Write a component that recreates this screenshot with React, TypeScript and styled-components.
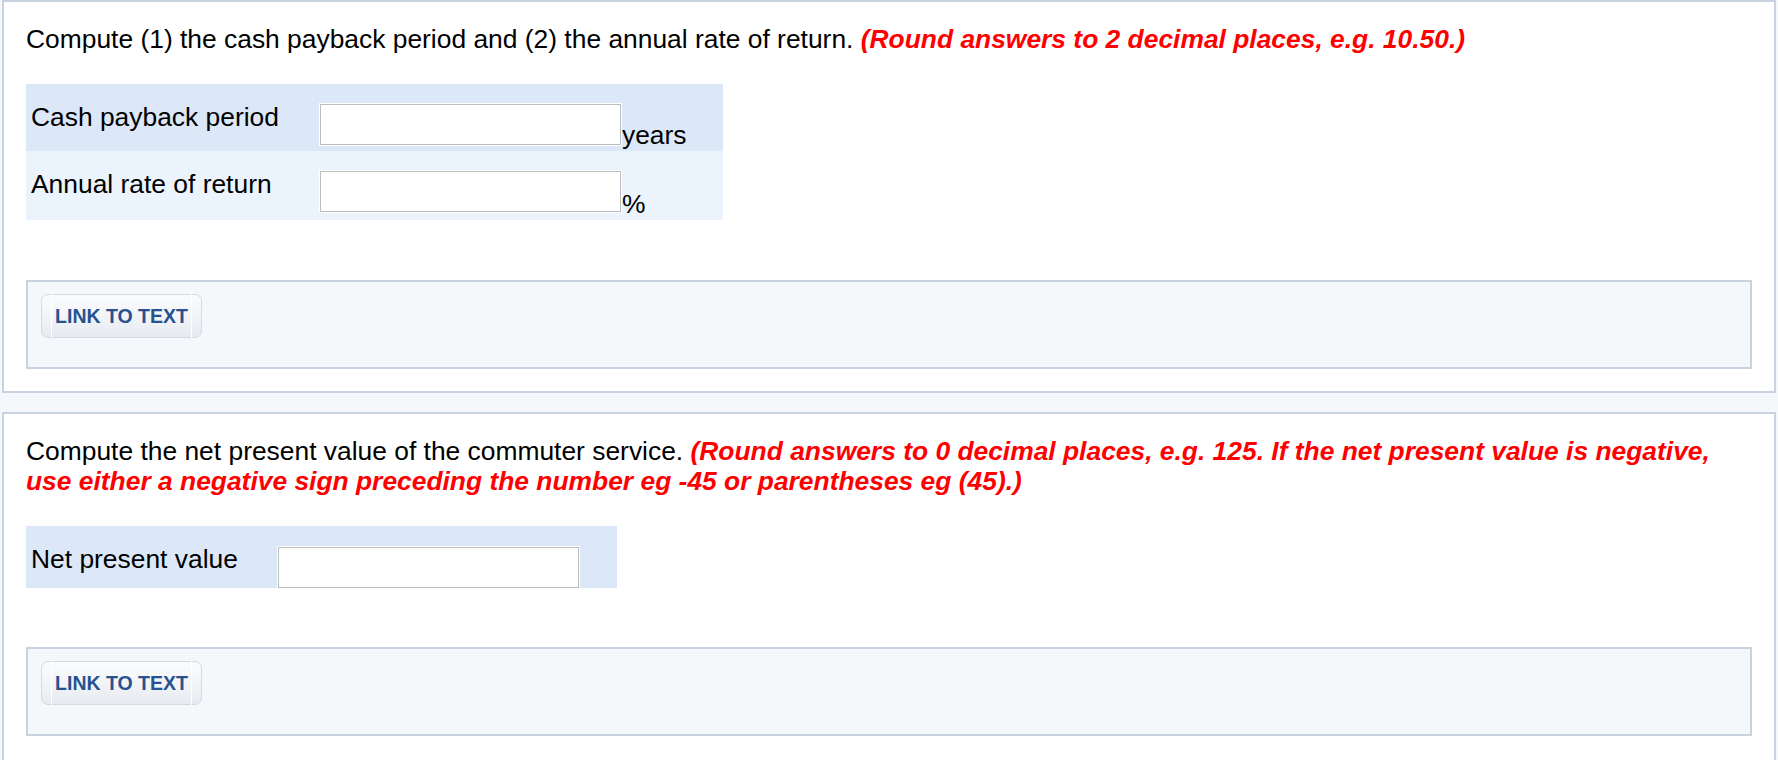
import React from 'react';
import styled, { createGlobalStyle } from 'styled-components';

const GlobalStyle = createGlobalStyle`
  html, body {
    margin: 0;
    padding: 0;
    background: #f4f8fb;
  }
  body {
    font-family: "Liberation Sans", Arial, Helvetica, sans-serif;
    color: #000;
  }
`;

const Page = styled.div`
  padding: 0 2px;
`;

const Panel = styled.section<{ $padBottom: number }>`
  background: #fff;
  border: 2px solid #c9d3e0;
  padding: 22px 22px ${(p) => p.$padBottom}px;
  margin-bottom: 19px;
`;

const Prompt = styled.p`
  margin: 0;
  font-size: 26.4px;
  line-height: 30px;
`;

const Note = styled.strong`
  color: #ff0000;
  font-style: italic;
  font-weight: bold;
`;

const AnswerTable = styled.div`
  display: flex;
  flex-direction: column;
  align-items: flex-start;
  margin-top: 30px;
`;

interface RowProps {
  $bg: string;
  $height: number;
}

const Row = styled.div<RowProps>`
  display: flex;
  align-items: flex-start;
  box-sizing: border-box;
  height: ${(p) => p.$height}px;
  background: ${(p) => p.$bg};
`;

const Label = styled.div<{ $width: number }>`
  box-sizing: border-box;
  width: ${(p) => p.$width}px;
  padding: 18px 0 0 5px;
  font-size: 26.4px;
  line-height: 30px;
`;

const Field = styled.input<{ $top: number }>`
  box-sizing: border-box;
  margin: ${(p) => p.$top}px 0 0 0;
  width: 301px;
  height: 41px;
  padding: 0 4px;
  border: 1px solid #bdbdbd;
  outline: 1px solid #fff;
  background: #fff;
  font-family: inherit;
  font-size: 22px;
`;

const Unit = styled.span<{ $width: number }>`
  align-self: flex-end;
  width: ${(p) => p.$width}px;
  margin-bottom: 3px;
  font-size: 26.4px;
  line-height: 26px;
  padding-left: 1px;
`;

const LinkBox = styled.div<{ $gap: number }>`
  box-sizing: border-box;
  height: 89px;
  margin-top: ${(p) => p.$gap}px;
  padding: 12px 13px;
  background: #f4f8fb;
  border: 2px solid #c9d3e0;
`;

const LinkButton = styled.button`
  position: relative;
  box-sizing: border-box;
  width: 161px;
  height: 44px;
  padding: 0;
  border: 1px solid #d2dae4;
  border-radius: 7px;
  background: linear-gradient(#fafbfd 0%, #f1f4f7 55%, #e6eaef 100%);
  color: #27528f;
  font-family: inherit;
  font-size: 19.5px;
  font-weight: bold;
  cursor: pointer;

  &::before,
  &::after {
    content: '';
    position: absolute;
    top: -1px;
    bottom: -1px;
    width: 1px;
    background: rgba(255, 255, 255, 0.95);
  }
  &::before {
    left: 9px;
  }
  &::after {
    right: 9px;
  }
`;

interface Line {
  label: string;
  unit?: string;
  height: number;
}

interface QuestionProps {
  text: React.ReactNode;
  lines: Line[];
  labelWidth: number;
  unitWidth: number;
  inputTop: number;
  linkGap: number;
  padBottom: number;
}

const rowColors = ['#dce8f8', '#ebf3fd'];

const Question = ({ text, lines, labelWidth, unitWidth, inputTop, linkGap, padBottom }: QuestionProps) => (
  <Panel $padBottom={padBottom}>
    <Prompt>{text}</Prompt>
    <AnswerTable>
      {lines.map((line, i) => (
        <Row key={line.label} $bg={rowColors[i % 2]} $height={line.height}>
          <Label $width={labelWidth}>{line.label}</Label>
          <Field type="text" $top={inputTop} aria-label={line.label} />
          <Unit $width={unitWidth}>{line.unit}</Unit>
        </Row>
      ))}
    </AnswerTable>
    <LinkBox $gap={linkGap}>
      <LinkButton type="button">LINK TO TEXT</LinkButton>
    </LinkBox>
  </Panel>
);

export default function App() {
  return (
    <Page>
      <GlobalStyle />
      <Question
        text={
          <>
            Compute (1) the cash payback period and (2) the annual rate of return.{' '}
            <Note>(Round answers to 2 decimal places, e.g. 10.50.)</Note>
          </>
        }
        lines={[
          { label: 'Cash payback period', unit: 'years', height: 67 },
          { label: 'Annual rate of return', unit: '%', height: 69 },
        ]}
        labelWidth={294}
        unitWidth={101}
        inputTop={20}
        linkGap={60}
        padBottom={22}
      />
      <Question
        text={
          <>
            Compute the net present value of the commuter service.{' '}
            <Note>
              (Round answers to 0 decimal places, e.g. 125. If the net present value is negative,
              <br />
              use either a negative sign preceding the number eg -45 or parentheses eg (45).)
            </Note>
          </>
        }
        lines={[{ label: 'Net present value', height: 62 }]}
        labelWidth={252}
        unitWidth={37}
        inputTop={21}
        linkGap={59}
        padBottom={40}
      />
    </Page>
  );
}
